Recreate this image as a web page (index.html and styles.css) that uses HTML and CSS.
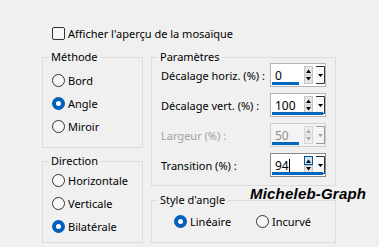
FILE: index.html
```html
<!DOCTYPE html>
<html lang="fr">
<head>
<meta charset="utf-8">
<title>Mosaïque</title>
<link rel="stylesheet" href="styles.css">
</head>
<body>
<div class="dialog">
  <div class="check"><span class="cbox"></span>Afficher l'aperçu de la mosaïque</div>
  <div class="groups">
    <div class="col left">
      <fieldset class="grp methode">
        <legend>Méthode</legend>
        <div class="radio"><span class="rb"></span>Bord</div>
        <div class="radio"><span class="rb on"></span>Angle</div>
        <div class="radio"><span class="rb"></span>Miroir</div>
      </fieldset>
      <fieldset class="grp direction">
        <legend>Direction</legend>
        <div class="radio"><span class="rb"></span>Horizontale</div>
        <div class="radio"><span class="rb"></span>Verticale</div>
        <div class="radio"><span class="rb on"></span>Bilatérale</div>
      </fieldset>
    </div>
    <div class="col right">
      <fieldset class="grp params">
        <legend>Paramètres</legend>
        <div class="row">
          <span class="lbl">Décalage horiz. (%) :</span>
          <div class="spin"><span class="val">0</span><span class="bar" style="width:27px"></span>
            <span class="updown"><svg width="9" height="18" viewBox="0 0 9 18"><rect x="0.5" y="0.5" width="8" height="17" fill="#e6e6e6" stroke="#c4c4c4"/><path d="M2 7h5L4.5 3.5z" fill="#000"/><path d="M2 11h5L4.5 14.5z" fill="#000"/><line x1="1" y1="9" x2="8" y2="9" stroke="#c4c4c4"/></svg></span>
            <span class="drop"><svg width="9" height="18" viewBox="0 0 9 18"><path d="M0 0.5H8.5V17.5H0" fill="#f6f6f6" stroke="#333"/><path d="M2 8h5L4.5 11z" fill="#000"/></svg></span>
          </div>
        </div>
        <div class="row">
          <span class="lbl">Décalage vert. (%) :</span>
          <div class="spin"><span class="val">100</span><span class="bar" style="width:51px"></span>
            <span class="updown"><svg width="9" height="18" viewBox="0 0 9 18"><rect x="0.5" y="0.5" width="8" height="17" fill="#e6e6e6" stroke="#c4c4c4"/><path d="M2 7h5L4.5 3.5z" fill="#000"/><path d="M2 11h5L4.5 14.5z" fill="#000"/><line x1="1" y1="9" x2="8" y2="9" stroke="#c4c4c4"/></svg></span>
            <span class="drop"><svg width="9" height="18" viewBox="0 0 9 18"><path d="M0 0.5H8.5V17.5H0" fill="#f6f6f6" stroke="#333"/><path d="M2 8h5L4.5 11z" fill="#000"/></svg></span>
          </div>
        </div>
        <div class="row disabled">
          <span class="lbl">Largeur (%) :</span>
          <div class="spin"><span class="val">50</span><span class="bar" style="width:27px"></span>
            <span class="updown"><svg width="9" height="18" viewBox="0 0 9 18"><rect x="0.5" y="0.5" width="8" height="17" fill="#eeeeee" stroke="#d4d4d4"/><path d="M2 7h5L4.5 3.5z" fill="#a8a8a8"/><path d="M2 11h5L4.5 14.5z" fill="#a8a8a8"/><line x1="1" y1="9" x2="8" y2="9" stroke="#d4d4d4"/></svg></span>
            <span class="drop"><svg width="9" height="18" viewBox="0 0 9 18"><path d="M0 0.5H8.5V17.5H0" fill="#f4f4f4" stroke="#9a9a9a"/><path d="M2 8h5L4.5 11z" fill="#a0a0a0"/></svg></span>
          </div>
        </div>
        <div class="row">
          <span class="lbl">Transition (%) :</span>
          <div class="spin focus"><span class="val">94<span class="caret"></span></span><span class="bar" style="width:51px"></span>
            <span class="updown"><svg width="9" height="18" viewBox="0 0 9 18"><rect x="0.5" y="0.5" width="8" height="8" fill="#cce4f7" stroke="#005499"/><rect x="0.5" y="9.5" width="8" height="8" fill="#e6e6e6" stroke="#c4c4c4"/><path d="M2 7h5L4.5 3.5z" fill="#000"/><path d="M2 11h5L4.5 14.5z" fill="#000"/></svg></span>
            <span class="drop"><svg width="9" height="18" viewBox="0 0 9 18"><path d="M0 0.5H8.5V17.5H0" fill="#f6f6f6" stroke="#333"/><path d="M2 8h5L4.5 11z" fill="#000"/></svg></span>
          </div>
        </div>
      </fieldset>
      <fieldset class="grp style">
        <legend>Style d'angle</legend>
        <div class="hradios">
          <div class="radio"><span class="rb on"></span>Linéaire</div>
          <div class="radio"><span class="rb"></span>Incurvé</div>
        </div>
      </fieldset>
      <div class="mark">Micheleb-Graph</div>
    </div>
  </div>
</div>
</body>
</html>
```
FILE: styles.css
```css
html, body {
  margin: 0;
  padding: 0;
  background: #f0f0f0;
}
body {
  width: 379px;
  height: 247px;
  overflow: hidden;
  font-family: "Noto Sans", "Open Sans", sans-serif;
  font-size: 11px;
  color: #000;
}
.dialog {
  padding: 25px 0 0 42px;
}
.check {
  display: flex;
  align-items: center;
  height: 16px;
  padding-left: 10px;
  gap: 3px;
  white-space: nowrap;
}
.cbox {
  width: 11px;
  height: 11px;
  border: 1px solid #333;
  border-radius: 2px;
  background: #f7f7f7;
}
.groups {
  display: flex;
  gap: 8px;
  margin-top: 10px;
}
.col {
  display: flex;
  flex-direction: column;
}
.left { width: 101px; gap: 7px; }
.right { width: 185px; gap: 8px; position: relative; }
.grp {
  margin: 0;
  border: 1px solid #dcdcdc;
  padding: 0 0 0 9px;
  min-width: 0;
}
.grp legend {
  padding: 0 2px;
  margin-left: -3px;
  line-height: 12px;
  height: 12px;
  white-space: nowrap;
}
.methode { padding-top: 6px; padding-bottom: 9px; }
.direction { padding-top: 2px; padding-bottom: 4px; }
.radio {
  display: flex;
  align-items: center;
  height: 23px;
  gap: 3px;
  white-space: nowrap;
}
.rb {
  flex: none;
  width: 11px;
  height: 11px;
  border: 1px solid #333;
  border-radius: 50%;
  background: #f7f7f7;
  box-sizing: content-box;
}
.rb.on {
  width: 5px;
  height: 5px;
  border: 4px solid #005fb8;
  background: #fff;
}
.params {
  display: flex;
  flex-direction: column;
  gap: 6px;
  padding: 0 0 8px 9px;
}
.row {
  display: flex;
  align-items: center;
  height: 24px;
}
.lbl {
  flex: 0 0 109px;
  white-space: nowrap;
}
.disabled .lbl { color: #a0a0a0; }
.spin {
  flex: none;
  position: relative;
  width: 54px;
  height: 22px;
  border: 1px solid #b5b5b5;
  background: #fff;
  display: flex;
  align-items: center;
}
.disabled .spin { background: #f4f4f4; border-color: #cfcfcf; }
.spin.focus { border-color: #8a8a8a; }
.val {
  position: relative;
  padding-left: 4px;
  width: 27px;
  font-size: 12px;
}
.disabled .val { color: #8d8d8d; }
.caret {
  display: inline-block;
  width: 1px;
  height: 14px;
  background: #000;
  vertical-align: -3px;
}
.bar {
  position: absolute;
  left: 1px;
  bottom: 1px;
  height: 3px;
  background: #0067c0;
}
.updown { display: flex; margin-left: 2px; }
.drop { display: flex; margin-left: 3px; }
.style { padding: 4px 0 9px 9px; }
.hradios {
  display: grid;
  grid-template-columns: 82px auto;
  padding-left: 13px;
}
.mark {
  position: absolute;
  left: 99px;
  top: 134px;
  white-space: nowrap;
  font-family: "Liberation Sans", Arial, sans-serif;
  font-weight: bold;
  font-style: italic;
  font-size: 15px;
  letter-spacing: 0.2px;
}
```
